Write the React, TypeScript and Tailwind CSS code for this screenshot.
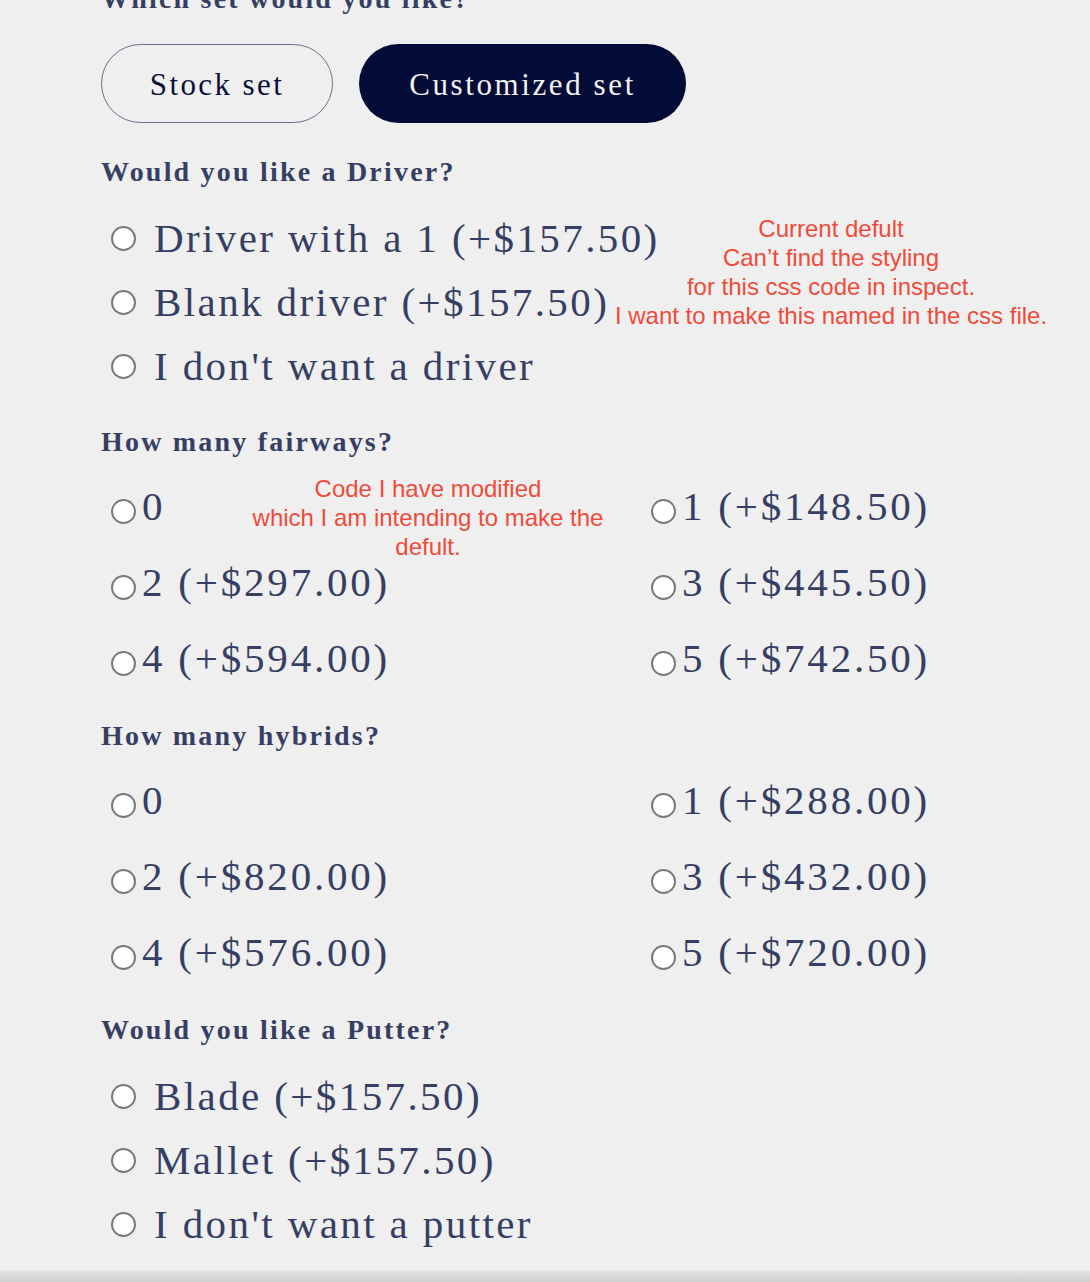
import React from 'react';

const driverOptions = ['Driver with a 1 (+$157.50)', 'Blank driver (+$157.50)', "I don't want a driver"];
const fairwayOptions = ['0', '1 (+$148.50)', '2 (+$297.00)', '3 (+$445.50)', '4 (+$594.00)', '5 (+$742.50)'];
const hybridOptions = ['0', '1 (+$288.00)', '2 (+$820.00)', '3 (+$432.00)', '4 (+$576.00)', '5 (+$720.00)'];
const putterOptions = ['Blade (+$157.50)', 'Mallet (+$157.50)', "I don't want a putter"];

function Radio({ className = '' }: { className?: string }) {
  return <span className={`block w-[25px] h-[25px] shrink-0 rounded-full border-2 border-[#7a7a7a] bg-white ${className}`} />;
}

function Heading({ children, className = '' }: { children: React.ReactNode; className?: string }) {
  return <h2 className={`h-[36px] text-[28px] leading-[36px] font-bold tracking-[2.2px] text-[#363f63] whitespace-nowrap ${className}`}>{children}</h2>;
}

function StackedOptions({ options, className = '' }: { options: string[]; className?: string }) {
  return (
    <div className={className}>
      {options.map((opt) => (
        <label key={opt} className="flex items-center h-[64px] pl-[10px]">
          <Radio />
          <span className="ml-[18px] text-[41px] leading-[64px] tracking-[2.4px] text-[#363f63] whitespace-nowrap">{opt}</span>
        </label>
      ))}
    </div>
  );
}

function GridOptions({ options, className = '' }: { options: string[]; className?: string }) {
  return (
    <div className={`grid grid-cols-[540px_1fr] ${className}`}>
      {options.map((opt) => (
        <label key={opt} className="flex items-center h-[76px] pl-[10px]">
          <Radio className="translate-y-[5px]" />
          <span className="ml-[6px] text-[41px] leading-[76px] tracking-[2.8px] text-[#363f63] whitespace-nowrap">{opt}</span>
        </label>
      ))}
    </div>
  );
}

export default function App() {
  return (
    <div className="relative h-[1282px] overflow-hidden bg-[#efefef] flex flex-col font-['Liberation_Serif',serif]">
      <div className="pl-[101px]">
        <Heading className="-mt-[19px]">Which set would you like?</Heading>

        <div className="mt-[27px] flex gap-[26px]">
          <button className="w-[232px] h-[79px] pt-[4px] rounded-full border-[1.5px] border-[#6c6f8c] text-[31px] tracking-[2.4px] text-[#0a0f3a]">
            Stock set
          </button>
          <button className="w-[327px] h-[79px] pt-[4px] rounded-full bg-[#030b37] text-[31px] tracking-[2.6px] text-[#f2f2f2]">
            Customized set
          </button>
        </div>

        <Heading className="mt-[31px]">Would you like a Driver?</Heading>
        <StackedOptions options={driverOptions} className="mt-[16px]" />

        <Heading className="mt-[26px]">How many fairways?</Heading>
        <GridOptions options={fairwayOptions} className="mt-[8px]" />

        <Heading className="mt-[22px]">How many hybrids?</Heading>
        <GridOptions options={hybridOptions} className="mt-[8px]" />

        <Heading className="mt-[22px]">Would you like a Putter?</Heading>
        <StackedOptions options={putterOptions} className="mt-[16px]" />
      </div>

      {/* annotations */}
      <div className="absolute left-[591px] top-[214px] w-[480px] text-center font-['Liberation_Sans',sans-serif] text-[24px] leading-[29px] text-[#ee4b3b]">
        <p>Current defult</p>
        <p>Can’t find the styling</p>
        <p>for this css code in inspect.</p>
        <p>I want to make this named in the css file.</p>
      </div>
      <div className="absolute left-[228px] top-[474px] w-[400px] text-center font-['Liberation_Sans',sans-serif] text-[24px] leading-[29px] text-[#ee4b3b]">
        <p>Code I have modified</p>
        <p>which I am intending to make the</p>
        <p>defult.</p>
      </div>

      <div className="mt-auto h-[12px] bg-gradient-to-b from-[#e6e6e6] to-[#cfcfcf]" />
    </div>
  );
}
